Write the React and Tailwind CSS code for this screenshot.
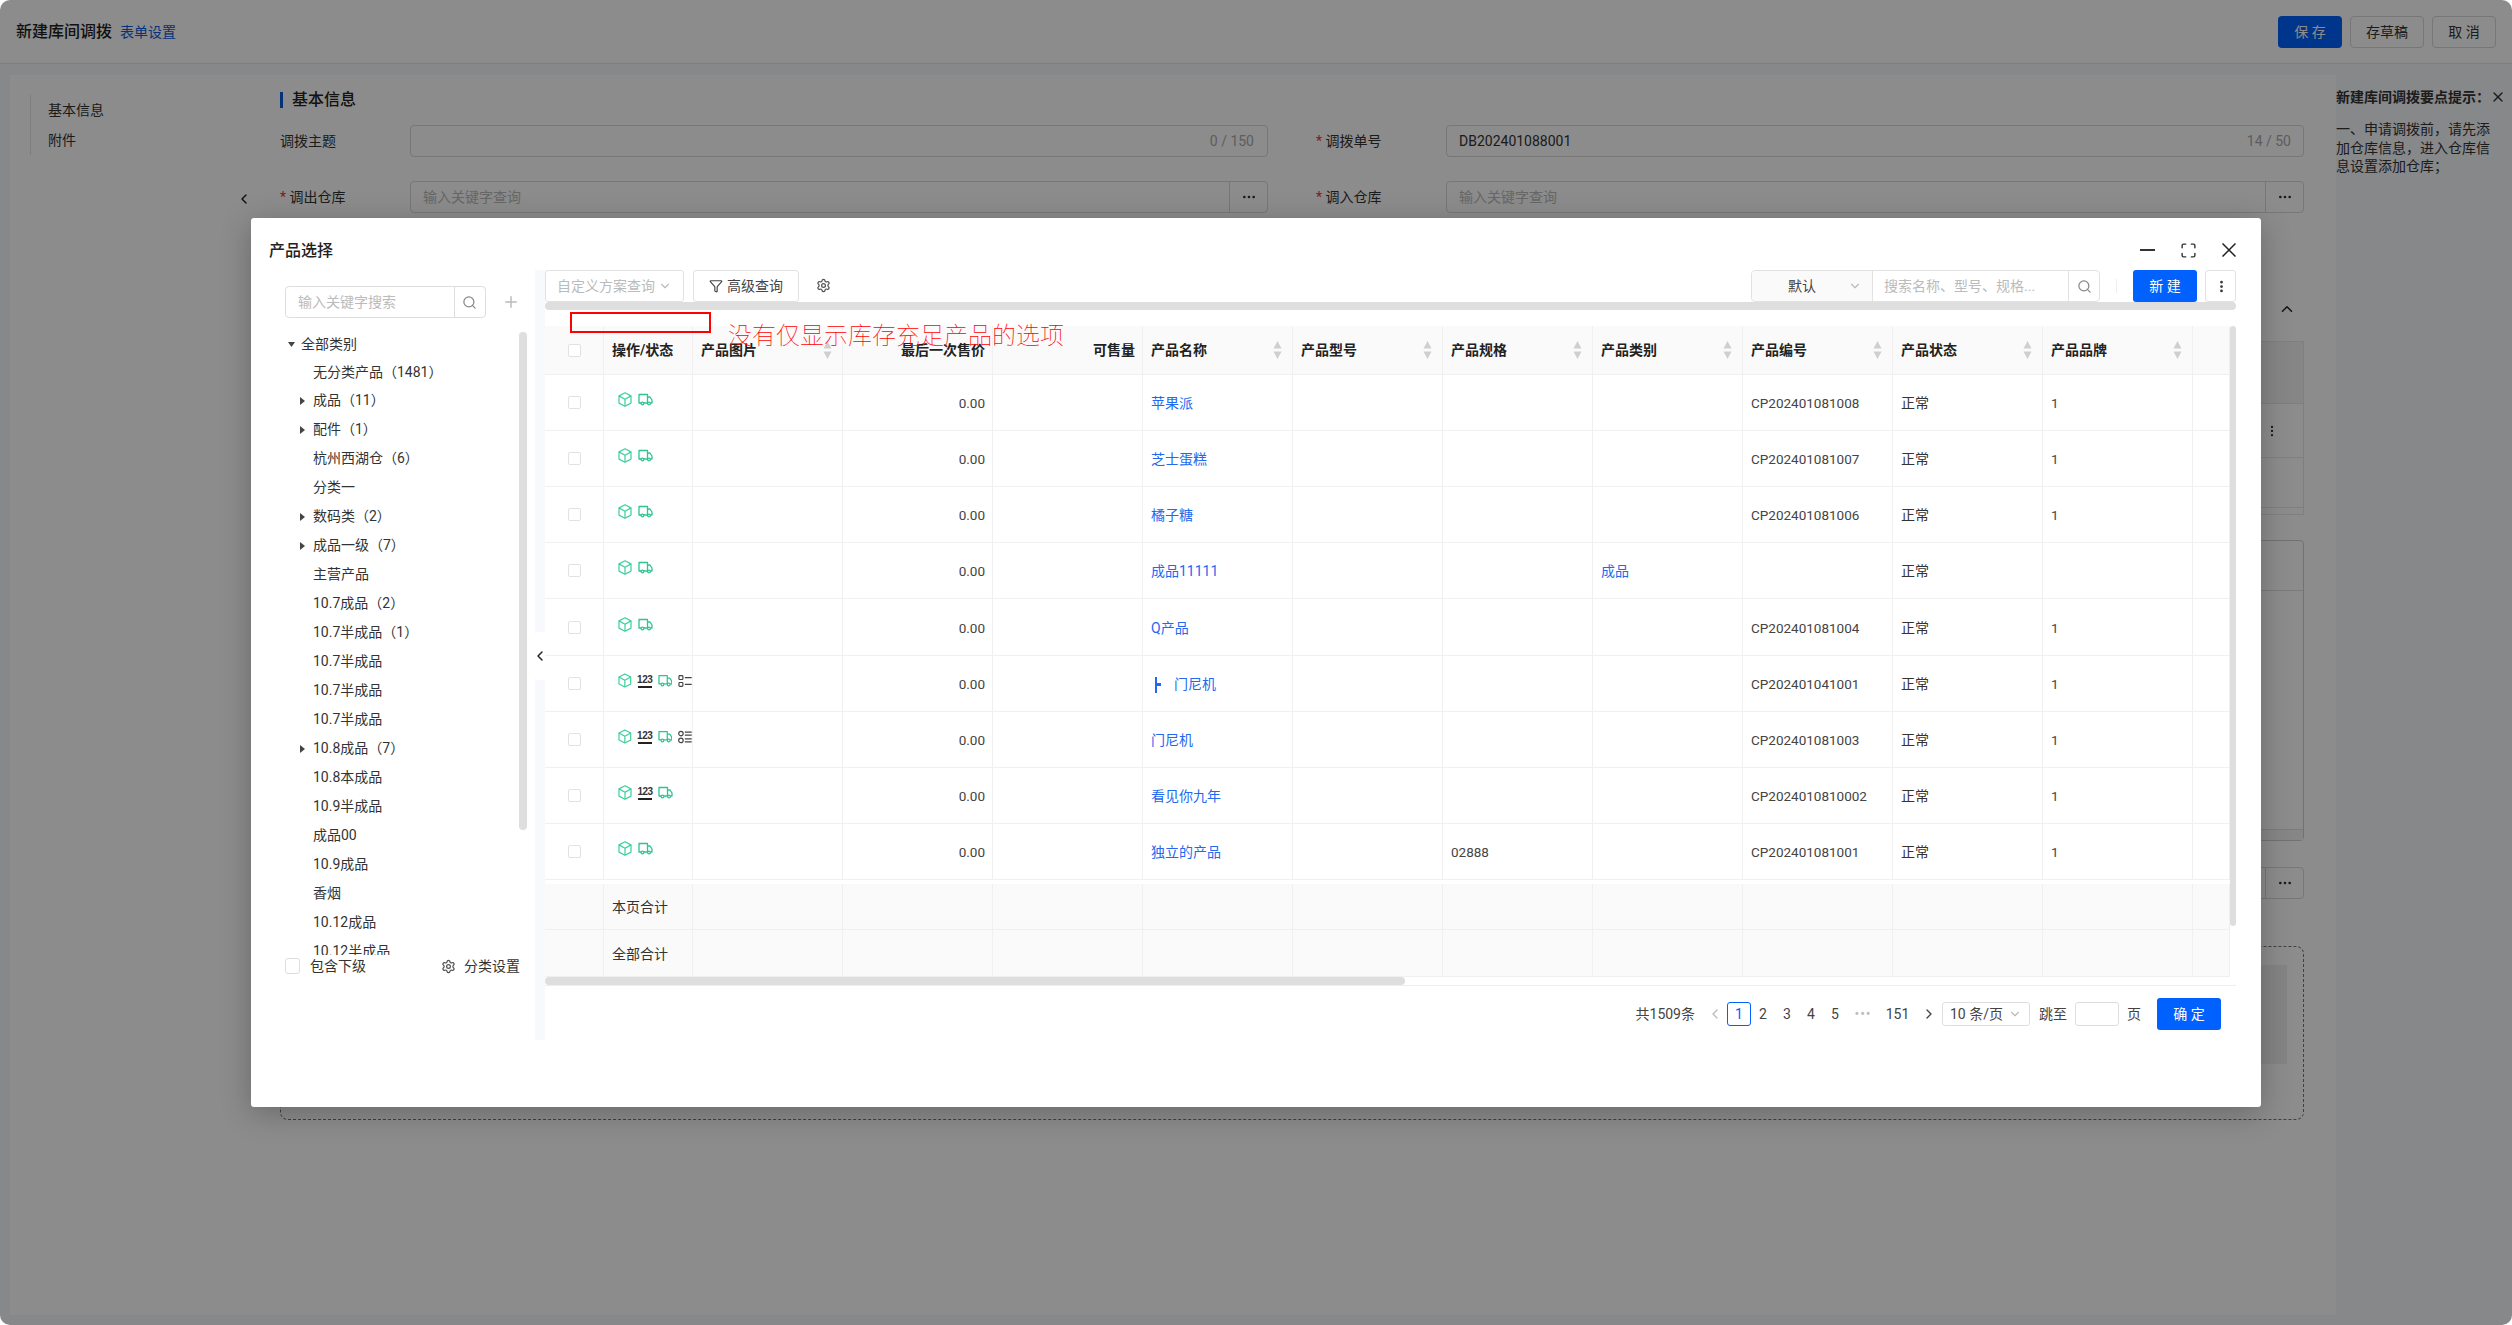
import React from 'react'
import { ChevronDown, ChevronLeft, ChevronRight, ChevronUp, Ellipsis, EllipsisVertical, Funnel, Maximize, Plus, Search, Settings, X } from 'lucide-react'

const TREE = [
  { label: '全部类别', level: 0, open: true },
  { label: '无分类产品（1481）', level: 1 },
  { label: '成品（11）', level: 1, arrow: true },
  { label: '配件（1）', level: 1, arrow: true },
  { label: '杭州西湖仓（6）', level: 1 },
  { label: '分类一', level: 1 },
  { label: '数码类（2）', level: 1, arrow: true },
  { label: '成品一级（7）', level: 1, arrow: true },
  { label: '主营产品', level: 1 },
  { label: '10.7成品（2）', level: 1 },
  { label: '10.7半成品（1）', level: 1 },
  { label: '10.7半成品', level: 1 },
  { label: '10.7半成品', level: 1 },
  { label: '10.7半成品', level: 1 },
  { label: '10.8成品（7）', level: 1, arrow: true },
  { label: '10.8本成品', level: 1 },
  { label: '10.9半成品', level: 1 },
  { label: '成品00', level: 1 },
  { label: '10.9成品', level: 1 },
  { label: '香烟', level: 1 },
  { label: '10.12成品', level: 1 },
  { label: '10.12半成品', level: 1 },
]

const ROWS = [
  { name: '苹果派', code: 'CP202401081008', brand: '1', h: 'h-[56px]' },
  { name: '芝士蛋糕', code: 'CP202401081007', brand: '1', h: 'h-[56px]' },
  { name: '橘子糖', code: 'CP202401081006', brand: '1', h: 'h-[56px]' },
  { name: '成品11111', category: '成品', h: 'h-[56px]' },
  { name: 'Q产品', code: 'CP202401081004', brand: '1', h: 'h-[57px]' },
  { name: '门尼机', code: 'CP202401041001', brand: '1', h: 'h-[56px]', child: true, num: true, list: 'square' },
  { name: '门尼机', code: 'CP202401081003', brand: '1', h: 'h-[56px]', num: true, list: 'round' },
  { name: '看见你九年', code: 'CP2024010810002', brand: '1', h: 'h-[56px]', num: true },
  { name: '独立的产品', spec: '02888', code: 'CP202401081001', brand: '1', h: 'h-[56px]' },
]

const COLS = 'grid grid-cols-[59px_89px_150px_150px_150px_150px_150px_150px_150px_150px_150px_150px_37px]'
const CELL = 'border-r border-[#f0f0f0] flex items-center px-2 min-w-0'
const TEXT_CELL = 'border-r border-[#f0f0f0] flex items-center px-2 pt-[2px] min-w-0'

function CubeIcon() {
  return (
    <svg width="14" height="15" viewBox="0 0 14 15" fill="none" stroke="#3ccf9c" strokeWidth="1.2" strokeLinejoin="round">
      <path d="M7 .8 13 3.9v7.2L7 14.2 1 11.1V3.9z" />
      <path d="M1 3.9 7 7.2l6-3.3M7 7.2v7" />
    </svg>
  )
}

function TruckIcon() {
  return (
    <svg width="15" height="13" viewBox="0 0 15 13" fill="none" stroke="#2fc490" strokeWidth="1.3" strokeLinejoin="round">
      <path d="M3 10H1V1.5h8.5V10H6" />
      <path d="M9.5 4H12l2 3v3h-1.5M9.5 10h.5" />
      <circle cx="4.5" cy="10.5" r="1.4" />
      <circle cx="11" cy="10.5" r="1.4" />
    </svg>
  )
}

function ListIcon({ round }) {
  if (round) {
    return (
      <svg width="14" height="14" viewBox="0 0 14 14" fill="none" stroke="#444" strokeWidth="1.2">
        <circle cx="3" cy="3.5" r="2.3" />
        <circle cx="3" cy="10.5" r="2.3" />
        <path d="M7 2h7M7 5h7M7 9h7M7 12h7" />
      </svg>
    )
  }
  return (
    <svg width="14" height="14" viewBox="0 0 14 14" fill="none" stroke="#444" strokeWidth="1.2">
      <rect x="1" y="1.5" width="4" height="4" rx=".8" />
      <rect x="1" y="8.5" width="4" height="4" rx=".8" />
      <path d="M7 3.5h7M7 10.5h7" />
    </svg>
  )
}

function NumIcon() {
  return (
    <div className="w-[14px] h-[14px] flex flex-col items-center justify-between">
      <span className="text-[10px] leading-[11px] font-bold text-[#333] tracking-[-0.5px] font-['Liberation_Sans',sans-serif]">123</span>
      <span className="w-[14px] h-[2px] bg-[#222]" />
    </div>
  )
}

function SortArrows() {
  return (
    <svg width="9" height="18" viewBox="0 0 9 18" fill="#cfcfcf" className="shrink-0">
      <path d="M4.5 0 8.5 7.5H.5z" />
      <path d="M4.5 18 .5 10.5h8z" />
    </svg>
  )
}

function Check() {
  return <span className="inline-block w-[13px] h-[13px] border border-[#e2e2e2] rounded-[2px] bg-white" />
}

function HeadCell({ label, sort, right }) {
  return (
    <div className={`${CELL} font-semibold text-[#222] ${right ? 'justify-end pr-[7px]' : 'justify-between pr-[10px]'}`}>
      <span>{label}</span>
      {sort && <SortArrows />}
    </div>
  )
}

function BgInput({ children, more, className = '' }) {
  return (
    <div className={`h-[32px] border border-[#d9d9d9] rounded-[4px] flex items-center justify-between pl-3 bg-white ${className}`}>
      {children}
      {more && (
        <div className="w-[38px] h-full border-l border-[#d9d9d9] flex items-center justify-center text-[#333]">
          <Ellipsis size={16} />
        </div>
      )}
    </div>
  )
}

function Background() {
  return (
    <>
      {/* Top bar */}
      <div className="h-[64px] pt-[1px] bg-white border-b border-[#e6e6e6] flex items-center justify-between pl-4 pr-4">
        <div className="flex items-center gap-2">
          <span className="text-[16px] font-medium text-[#222]">新建库间调拨</span>
          <span className="text-[14px] text-[#0a5bdc]">表单设置</span>
        </div>
        <div className="flex items-center gap-2 text-[14px] text-[#333]">
          <div className="w-[64px] h-[32px] rounded-[4px] bg-[#0061ff] text-white flex items-center justify-center">保 存</div>
          <div className="w-[74px] h-[32px] rounded-[4px] border border-[#d9d9d9] bg-white flex items-center justify-center">存草稿</div>
          <div className="w-[64px] h-[32px] rounded-[4px] border border-[#d9d9d9] bg-white flex items-center justify-center">取 消</div>
        </div>
      </div>

      <div className="flex h-[1261px] bg-[#f6f7fa]">
        <div className="w-[2336px] pl-[10px] pt-[11px] pb-[10px]">
          <div className="relative flex h-full bg-white text-[14px] text-[#333]">
            {/* Left anchor nav */}
            <div className="w-[238px] pl-[20px] pt-[20px]">
              <div className="border-l border-[#e4e4e4] h-[60px] pl-[17px] flex flex-col justify-around">
                <span>基本信息</span>
                <span>附件</span>
              </div>
            </div>
            <div className="absolute left-[230px] top-[100px] w-[8px] h-[48px] bg-white rounded-l-[4px] flex items-center justify-center text-[#222]">
              <ChevronLeft size={16} strokeWidth={2.2} className="shrink-0" />
            </div>

            {/* Form */}
            <div className="pl-[32px] w-[2056px] pt-[17px]">
              <div className="flex items-center h-[16px] gap-[9px]">
                <span className="w-[3px] h-[16px] bg-[#0a5bdc]" />
                <span className="text-[16px] font-medium text-[#222]">基本信息</span>
              </div>
              <div className="mt-[17px] flex">
                <span className="w-[130px] leading-[32px]">调拨主题</span>
                <BgInput className="w-[858px] pr-[13px]"><span /><span className="text-[#aaa]">0 / 150</span></BgInput>
                <span className="w-[178px] leading-[32px] pl-[48px]"><span className="text-[#e33]">* </span>调拨单号</span>
                <BgInput className="w-[858px] pr-3"><span>DB202401088001</span><span className="text-[#aaa]">14 / 50</span></BgInput>
              </div>
              <div className="mt-[24px] flex">
                <span className="w-[130px] leading-[32px]"><span className="text-[#e33]">* </span>调出仓库</span>
                <BgInput className="w-[858px]" more><span className="text-[#bbb]">输入关键字查询</span></BgInput>
                <span className="w-[178px] leading-[32px] pl-[48px]"><span className="text-[#e33]">* </span>调入仓库</span>
                <BgInput className="w-[858px]" more><span className="text-[#bbb]">输入关键字查询</span></BgInput>
              </div>

              <div className="mt-[87px] h-[16px] flex justify-end pr-[8px] text-[#222]"><ChevronUp size={18} /></div>

              <div className="mt-[25px] h-[174px] border border-[#e8e8e8] flex flex-col">
                <div className="h-[62px] bg-[#f5f5f5] border-b border-[#e8e8e8]" />
                <div className="h-[54px] border-b border-[#e8e8e8] flex items-center justify-end pr-[24px]"><EllipsisVertical size={14} /></div>
                <div className="h-[50px] border-b border-[#e8e8e8]" />
              </div>

              <div className="mt-[25px] h-[301px] border border-[#d0d0d0] rounded-[4px] flex flex-col justify-between">
                <div className="h-[50px] border-b border-[#e0e0e0]" />
                <div className="h-[11px] bg-[#f5f5f5] border-t border-[#e0e0e0]" />
              </div>

              <BgInput className="mt-[26px] h-[31px]" more><span /></BgInput>

              <div className="mt-[47px] h-[174px] border border-dashed border-[#777] rounded-[8px] pt-[18px] pr-[16px] flex justify-end">
                <div className="w-[300px] h-[99px] bg-[#f0f0f0]" />
              </div>
            </div>
          </div>
        </div>

        {/* Tips */}
        <div className="w-[176px] pt-[23px] text-[14px] text-[#333]">
          <div className="w-[168px] h-[20px] flex items-center justify-between">
            <span className="font-semibold whitespace-nowrap">新建库间调拨要点提示：</span>
            <X size={16} className="shrink-0" />
          </div>
          <p className="mt-[13px] w-[156px] leading-[18.5px]">一、申请调拨前，请先添加仓库信息，进入仓库信息设置添加仓库；</p>
        </div>
      </div>
    </>
  )
}

function TreePanel() {
  return (
    <div className="w-[284px] pl-[34px] pt-[16px] text-[14px] text-[#333]">
      <div className="flex items-center">
        <div className="w-[201px] h-[32px] border border-[#dedede] rounded-[4px] flex items-center">
          <span className="w-[168px] pl-[12px] text-[#bbb]">输入关键字搜索</span>
          <div className="flex-1 h-full border-l border-[#dedede] flex items-center justify-center pr-[2px] text-[#888]"><Search size={15} /></div>
        </div>
        <Plus size={18} className="ml-[16px] text-[#bbb]" />
      </div>

      <div className="mt-[12px] flex">
        <div className="w-[234px] h-[625px] overflow-hidden">
          {TREE.map((item, i) => (
            <div key={i} className={`flex items-center ${i < 2 ? 'h-[28px]' : 'h-[29px]'} ${item.level ? 'ml-[12px]' : ''}`}>
              <span className="w-[16px] pl-[3px] flex items-center">
                {item.open && <svg width="7" height="5" viewBox="0 0 7 5" fill="#444"><path d="M0 0h7L3.5 5z" /></svg>}
                {item.arrow && <svg width="5" height="8" viewBox="0 0 5 8" fill="#444"><path d="M0 0l5 4-5 4z" /></svg>}
              </span>
              <span className="whitespace-nowrap">{item.label}</span>
            </div>
          ))}
        </div>
        <div className="mt-[2px] w-[8px] h-[498px] rounded-full bg-[#dedede]" />
      </div>

      <div className="mt-[3px] h-[16px] w-[235px] flex items-center justify-between">
        <div className="flex items-center gap-[10px]">
          <span className="w-[15px] h-[16px] border border-[#dedede] rounded-[3px]" />
          <span>包含下级</span>
        </div>
        <div className="flex items-center gap-[8px]">
          <Settings size={15} className="text-[#555]" />
          <span>分类设置</span>
        </div>
      </div>
    </div>
  )
}

function ProductTable() {
  return (
    <div className="mt-[16px] flex text-[14px] text-[#444]">
      <div className="w-[1685px]">
        <div className={`${COLS} h-[49px] bg-[#fafafa] border-b border-[#f0f0f0]`}>
          <div className={`${CELL} justify-center pl-0 pr-0`}><Check /></div>
          <HeadCell label="操作/状态" />
          <HeadCell label="产品图片" sort />
          <HeadCell label="最后一次售价" right />
          <HeadCell label="可售量" right />
          <HeadCell label="产品名称" sort />
          <HeadCell label="产品型号" sort />
          <HeadCell label="产品规格" sort />
          <HeadCell label="产品类别" sort />
          <HeadCell label="产品编号" sort />
          <HeadCell label="产品状态" sort />
          <HeadCell label="产品品牌" sort />
          <div className={CELL} />
        </div>

        {ROWS.map((row, i) => (
          <div key={i} className={`${COLS} ${row.h} border-b border-[#f0f0f0]`}>
            <div className={`${CELL} justify-center pl-0 pr-0`}><Check /></div>
            <div className={`${CELL} pl-[14px] pr-0 pb-[6px] gap-[6px]`}>
              <CubeIcon />
              {row.num && <NumIcon />}
              <TruckIcon />
              {row.list && <ListIcon round={row.list === 'round'} />}
            </div>
            <div className={CELL} />
            <div className={`${TEXT_CELL} justify-end pr-[7px] text-[13.5px]`}>0.00</div>
            <div className={CELL} />
            <div className={`${TEXT_CELL} text-[#2369f0]`}>
              {row.child && (
                <span className="ml-[4px] mr-[13px] w-[6px] h-[16px] border-l-2 border-[#2369f0] flex items-center">
                  <span className="w-[4px] h-[3px] bg-[#2369f0]" />
                </span>
              )}
              {row.name}
            </div>
            <div className={CELL} />
            <div className={`${TEXT_CELL} text-[13.5px]`}>{row.spec}</div>
            <div className={`${TEXT_CELL} text-[#2369f0]`}>{row.category}</div>
            <div className={`${TEXT_CELL} text-[13.5px]`}>{row.code}</div>
            <div className={`${TEXT_CELL} text-[#333]`}>正常</div>
            <div className={`${TEXT_CELL} text-[13.5px]`}>{row.brand}</div>
            <div className={CELL} />
          </div>
        ))}

        {['本页合计', '全部合计'].map((label, i) => (
          <div key={label} className={`${COLS} ${i === 0 ? 'mt-[4px] h-[46px]' : 'h-[47px]'} bg-[#fafafa] border-b border-[#f0f0f0]`}>
            <div className={CELL} />
            <div className={`${TEXT_CELL} text-[#333]`}>{label}</div>
            {Array.from({ length: 11 }).map((_, k) => <div key={k} className={CELL} />)}
          </div>
        ))}
      </div>
      <div className="w-[6px] h-[600px] rounded-full bg-[#dedede]" />
    </div>
  )
}

function Pagination() {
  return (
    <div className="pt-[12px] pr-[15px] flex items-center justify-end text-[14px] text-[#444]">
      <span className="mr-[12px]">共1509条</span>
      <ChevronLeft size={16} className="mr-[4px] text-[#bbb]" />
      <span className="w-[24px] h-[24px] border border-[#0061ff] rounded-[3px] text-[#0061ff] flex items-center justify-center">1</span>
      {[2, 3, 4, 5].map(n => <span key={n} className="w-[24px] text-center">{n}</span>)}
      <span className="w-[32px] text-center text-[#bbb] tracking-[1px]">•••</span>
      <span className="w-[37px] text-center">151</span>
      <ChevronRight size={16} className="mx-[5px] text-[#444]" />
      <div className="w-[88px] h-[24px] border border-[#dedede] rounded-[3px] flex items-center justify-between px-[7px]">
        <span className="whitespace-nowrap">10 条/页</span>
        <ChevronDown size={14} className="text-[#bbb]" />
      </div>
      <span className="ml-[9px]">跳至</span>
      <span className="ml-[8px] w-[44px] h-[24px] border border-[#dedede] rounded-[3px]" />
      <span className="ml-[8px]">页</span>
      <div className="ml-[16px] w-[64px] h-[32px] rounded-[3px] bg-[#0061ff] text-white flex items-center justify-center">确 定</div>
    </div>
  )
}

function ProductModal() {
  return (
    <div className="absolute left-[251px] top-[218px] w-[2010px] h-[889px] bg-white rounded-[3px] shadow-[0_6px_30px_rgba(0,0,0,0.25)]">
      <div className="h-[52px] pt-[12px] pl-[18px] pr-[25px] flex items-center justify-between text-[#222]">
        <span className="text-[16px] font-medium pt-[2px]">产品选择</span>
        <div className="flex items-center gap-[25px]">
          <span className="w-[15px] h-[2px] bg-[#333]" />
          <Maximize size={17} strokeWidth={2} className="text-[#333]" />
          <svg width="14" height="14" viewBox="0 0 14 14" stroke="#222" strokeWidth="1.5"><path d="M.5.5l13 13M13.5.5l-13 13" /></svg>
        </div>
      </div>

      <div className="relative flex h-[770px]">
        <TreePanel />
        <div className="w-[10px] bg-[#f8f9fc]" />
        <div className="absolute left-[284px] top-[362px] w-[10px] h-[48px] bg-white rounded-l-[4px] flex items-center justify-center text-[#222]">
          <ChevronLeft size={16} strokeWidth={2.2} className="shrink-0" />
        </div>

        <div className="w-[1691px]">
          {/* Toolbar */}
          <div className="h-[32px] flex items-center justify-between text-[14px]">
            <div className="flex items-center">
              <div className="w-[139px] h-[32px] border border-[#e2e2e2] rounded-[3px] flex items-center justify-between px-[11px] text-[#bbb]">
                <span className="whitespace-nowrap">自定义方案查询</span>
                <ChevronDown size={14} />
              </div>
              <div className="ml-[9px] w-[106px] h-[32px] border border-[#e2e2e2] rounded-[3px] flex items-center justify-center gap-[4px] text-[#444]">
                <Funnel size={14} />
                <span>高级查询</span>
              </div>
              <Settings size={15} className="ml-[17px] -mt-[1px] text-[#555]" />
            </div>
            <div className="flex items-center">
              <div className="w-[349px] h-[32px] border border-[#e2e2e2] rounded-[4px] flex items-center">
                <div className="w-[121px] h-full bg-[#fafafa] border-r border-[#e2e2e2] rounded-l-[4px] flex items-center justify-between pl-[36px] pr-[10px] text-[#444]">
                  <span>默认</span>
                  <ChevronDown size={14} className="text-[#bbb]" />
                </div>
                <span className="w-[195px] pl-[11px] text-[#bbb] whitespace-nowrap">搜索名称、型号、规格...</span>
                <div className="flex-1 h-full border-l border-[#e2e2e2] flex items-center justify-center text-[#888]"><Search size={15} /></div>
              </div>
              <span className="mx-[16px] w-[1px] h-[14px] bg-[#eee]" />
              <div className="w-[64px] h-[32px] rounded-[3px] bg-[#0061ff] text-white flex items-center justify-center">新 建</div>
              <div className="ml-[8px] w-[31px] h-[32px] border border-[#e2e2e2] rounded-[3px] flex items-center justify-center pl-[1px] text-[#333]">
                <EllipsisVertical size={15} strokeWidth={2.4} />
              </div>
            </div>
          </div>
          <div className="h-[8px] rounded-full bg-[#dedede]" />

          <ProductTable />

          <div className="w-[860px] h-[8px] rounded-full bg-[#dedede]" />
          <div className="border-t border-[#eeeeee]" />
          <Pagination />
        </div>
      </div>
    </div>
  )
}

export default function App() {
  return (
    <div className="w-[2512px] h-[1325px] bg-white overflow-hidden font-['Roboto','Noto_Sans_CJK_SC',sans-serif]">
      <div className="relative w-full h-full rounded-[10px] overflow-hidden">
        <Background />
        <div className="absolute inset-0 bg-black/45" />
        <ProductModal />

        {/* Red annotation drawn on the screenshot */}
        <div className="absolute left-[570px] top-[312px] w-[141px] h-[21px] border-2 border-[#f00]" />
        <span className="absolute left-[728px] top-[318px] text-[24px] leading-[32px] font-thin text-[#f00] whitespace-nowrap font-['Noto_Sans_CJK_SC',serif]">没有仅显示库存充足产品的选项</span>
      </div>
    </div>
  )
}
